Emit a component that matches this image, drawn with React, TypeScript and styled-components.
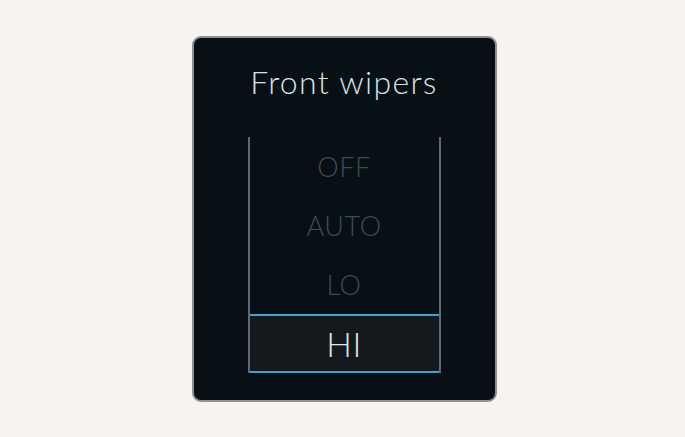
import React from 'react';
import styled, { createGlobalStyle } from 'styled-components';

const modes = ['OFF', 'AUTO', 'LO', 'HI'];
const selected = 'HI';

const GlobalStyle = createGlobalStyle`
  html, body {
    margin: 0;
    padding: 0;
    background: #f6f3f1;
  }
  body {
    font-family: Lato, "Noto Sans", sans-serif;
  }
`;

const Page = styled.div`
  width: 100vw;
  height: 100vh;
  display: flex;
  align-items: center;
  justify-content: center;
`;

const Card = styled.div`
  box-sizing: border-box;
  width: 305px;
  height: 366px;
  margin-left: 3px;
  margin-top: 1px;
  padding: 26px 54px 27px;
  background: #061015;
  border: 2px solid #8c9195;
  border-radius: 9px;
  display: flex;
  flex-direction: column;
  align-items: stretch;
`;

const Title = styled.h1`
  margin: 0;
  height: 36px;
  font-size: 32px;
  line-height: 36px;
  font-weight: 300;
  color: #dce1e4;
  text-align: center;
  letter-spacing: 1.3px;
  white-space: nowrap;
`;

const Column = styled.div`
  margin-top: 37px;
  flex: 1;
  display: flex;
  flex-direction: column;
  justify-content: flex-end;
  border-left: 2px solid #5e6a72;
  border-right: 2px solid #5e6a72;
`;

const Option = styled.div<{ $active: boolean }>`
  box-sizing: border-box;
  height: 59px;
  display: flex;
  align-items: center;
  justify-content: center;
  font-weight: 300;
  letter-spacing: 0.6px;
  font-size: ${({ $active }) => ($active ? '34px' : '27px')};
  color: ${({ $active }) => ($active ? '#e0e4e7' : '#434b51')};
  background: ${({ $active }) => ($active ? '#13191d' : 'transparent')};
  border-top: 2px solid ${({ $active }) => ($active ? '#4a9fcc' : 'transparent')};
  border-bottom: 2px solid ${({ $active }) => ($active ? '#4a9fcc' : 'transparent')};
`;

const App: React.FC = () => (
  <Page>
    <GlobalStyle />
    <Card>
      <Title>Front wipers</Title>
      <Column>
        {modes.map((mode) => (
          <Option key={mode} $active={mode === selected}>
            {mode}
          </Option>
        ))}
      </Column>
    </Card>
  </Page>
);

export default App;
